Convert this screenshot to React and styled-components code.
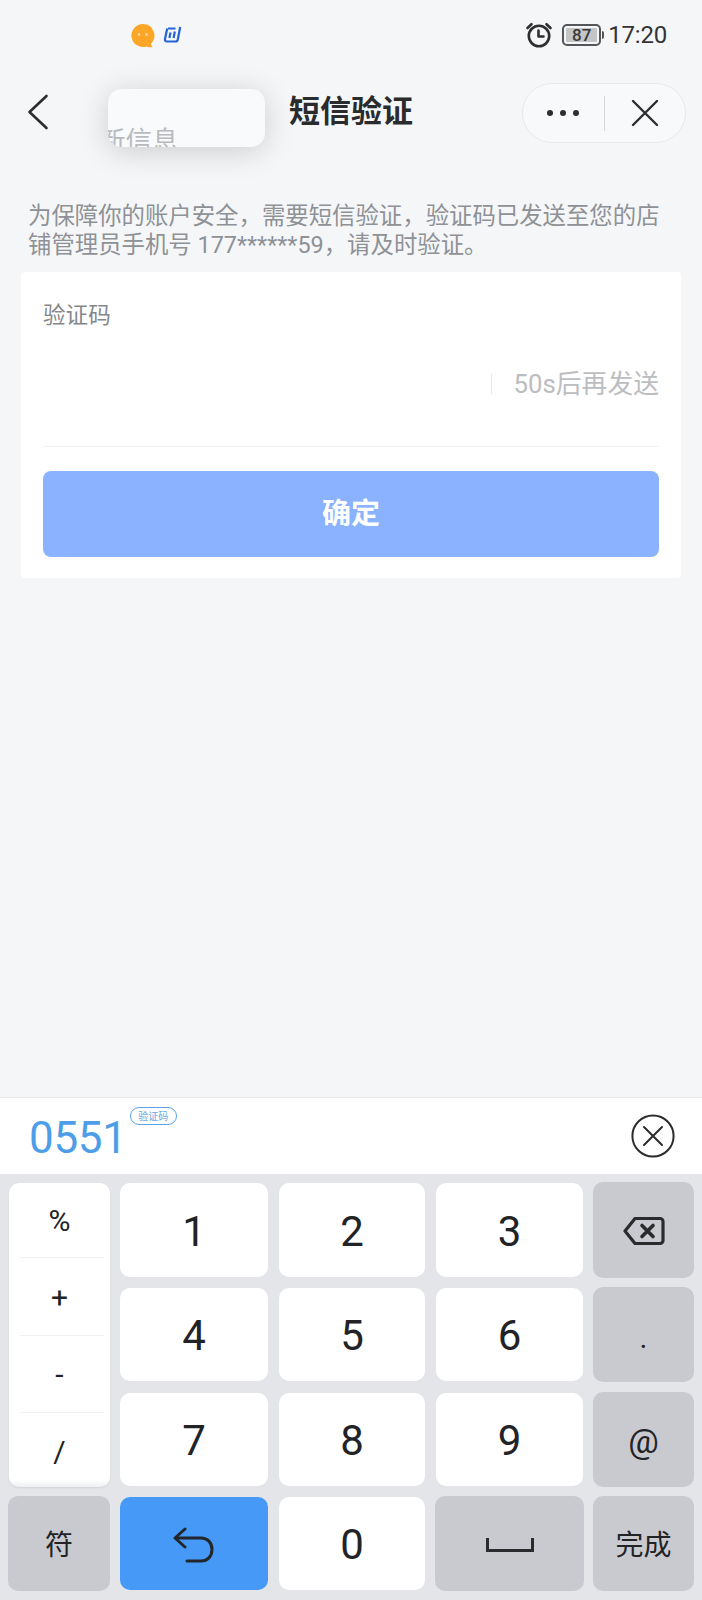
import React from "react";
import styled, { createGlobalStyle } from "styled-components";

const CJK = `"Noto Sans CJK SC", "Noto Sans", sans-serif`;
const LATIN_CJK = `Roboto, "Noto Sans CJK SC", sans-serif`;

const GlobalStyle = createGlobalStyle`
  html, body {
    margin: 0;
    padding: 0;
    background: #f5f6f8;
  }
  * {
    box-sizing: border-box;
  }
`;

const Page = styled.div`
  position: relative;
  width: 702px;
  height: 1600px;
  display: flex;
  flex-direction: column;
  background: #f5f6f8;
  font-family: ${LATIN_CJK};
  overflow: hidden;
`;

/* status bar */
const StatusBar = styled.div`
  height: 70px;
  display: flex;
  align-items: center;
  padding: 0 35px 0 131px;
`;

const NotifyIcons = styled.div`
  display: flex;
  align-items: center;
  gap: 6px;
`;

const StatusRight = styled.div`
  margin-left: auto;
  display: flex;
  align-items: center;
  gap: 9px;
`;

const BatteryBody = styled.div`
  width: 39px;
  height: 22px;
  border: 2px solid #55565a;
  border-radius: 5px;
  padding: 2px;
  position: relative;
  &::after {
    content: "";
    position: absolute;
    right: -5px;
    top: 5px;
    width: 2px;
    height: 8px;
    background: #55565a;
    border-radius: 0 2px 2px 0;
  }
`;

const BatteryLevel = styled.div`
  height: 100%;
  background: #c4c5c7;
  border-radius: 1px;
  display: flex;
  align-items: center;
  justify-content: center;
  font-size: 17px;
  font-weight: 500;
  color: #37383a;
  white-space: nowrap;
`;

const Clock = styled.span`
  font-size: 24px;
  color: #333436;
  margin-left: -2px;
  letter-spacing: -0.2px;
`;

/* navigation bar */
const NavBar = styled.div`
  height: 84px;
  display: flex;
  align-items: center;
  padding: 0 16px 0 27px;
`;

const BackButton = styled.div`
  width: 262px;
  display: flex;
  align-items: center;
`;

const Title = styled.h1`
  margin: 0 0 6px;
  font-family: ${CJK};
  font-size: 31px;
  line-height: 40px;
  font-weight: 700;
  color: #2a2b2d;
`;

const Capsule = styled.div`
  margin-left: auto;
  width: 164px;
  height: 60px;
  margin-top: 2px;
  border: 1px solid #e8e9eb;
  border-radius: 30px;
  background: #f8f9fa;
  display: flex;
  align-items: center;
`;

const CapsulePart = styled.div`
  flex: 1;
  display: flex;
  align-items: center;
  justify-content: center;
`;

const CapsuleDivider = styled.div`
  width: 1px;
  height: 35px;
  background: #d6d7da;
`;

const Dot = styled.span`
  width: 6px;
  height: 6px;
  border-radius: 50%;
  background: #2c2d2f;
  margin: 0 3.5px;
`;

const FloatingTip = styled.div`
  position: absolute;
  left: 108px;
  top: 89px;
  width: 157px;
  height: 58px;
  border-radius: 14px;
  background: #f9fafb;
  box-shadow: 0 4px 30px rgba(0, 0, 0, 0.17);
  overflow: hidden;
  display: flex;
  align-items: flex-end;
`;

const FloatingText = styled.span`
  font-family: ${CJK};
  font-size: 26.5px;
  line-height: 30px;
  color: #b9babd;
  margin-left: -9px;
  margin-bottom: -7px;
  white-space: nowrap;
`;

/* form */
const Intro = styled.p`
  margin: 48px 28px 12px;
  font-family: ${LATIN_CJK};
  font-size: 23.4px;
  line-height: 29px;
  color: #8e9195;
  width: 640px;
`;

const Card = styled.section`
  margin: 0 21px;
  height: 306px;
  padding: 28px 22px 0;
  background: #fff;
  border-radius: 4px;
`;

const Label = styled.div`
  font-family: ${CJK};
  font-size: 22.6px;
  line-height: 28px;
  color: #85878b;
`;

const CodeRow = styled.div`
  height: 119px;
  padding-bottom: 6px;
  display: flex;
  align-items: center;
  justify-content: flex-end;
  border-bottom: 1px solid #f2f3f5;
`;

const RowDivider = styled.span`
  width: 1px;
  height: 20px;
  background: #e6e7e9;
  margin-right: 22px;
`;

const Resend = styled.span`
  font-size: 25.8px;
  line-height: 30px;
  color: #bcbdc0;
`;

const ConfirmButton = styled.button`
  display: block;
  width: 100%;
  height: 86px;
  margin-top: 24px;
  border: 0;
  border-radius: 8px;
  background: #8ab2ff;
  color: #fff;
  font-family: ${CJK};
  font-size: 29px;
  font-weight: 700;
  padding: 0 0 6px;
`;

/* keyboard */
const Keyboard = styled.div`
  margin-top: auto;
`;

const Suggestion = styled.div`
  height: 77px;
  background: #fff;
  border-top: 1px solid #e8e9eb;
  padding: 0 27px 0 29px;
  display: flex;
  align-items: flex-start;
`;

const SmsCode = styled.span`
  font-size: 44px;
  line-height: 52px;
  margin-top: 14px;
  color: #4d9de8;
  letter-spacing: -0.3px;
`;

const SmsTag = styled.span`
  margin: 9px 0 0 3px;
  width: 47px;
  height: 18px;
  border: 1px solid #5aa3e6;
  border-radius: 9px;
  font-family: ${CJK};
  font-size: 10px;
  line-height: 16px;
  text-align: center;
  color: #6aa9e2;
`;

const DismissButton = styled.div`
  margin: 16px 0 0 auto;
`;

const KeyGrid = styled.div`
  height: 426px;
  padding-top: 8px;
  padding-left: 8px;
  background: #e4e5e9;
  display: grid;
  grid-template-columns: 102px 150px 148px 149px 101px;
  grid-template-rows: 96px 95px 95px 95px;
  column-gap: 9px;
  row-gap: 9.4px;
`;

const Key = styled.div`
  display: flex;
  align-items: center;
  justify-content: center;
  border-radius: 10px;
  color: #222326;
  font-size: ${(p) => p.$size || 42}px;
  padding-top: ${(p) => p.$drop || 2}px;
  background: ${(p) =>
    p.$tone === "gray" ? "#c9cacf" : p.$tone === "blue" ? "#4799f8" : "#fff"};
  margin: ${(p) => (p.$tone === "gray" ? 0 : "1px")};
`;

const ZhKey = styled(Key)`
  font-family: ${CJK};
  font-size: 28px;
  padding: 0 0 2px;
`;

const SymbolPanel = styled.div`
  grid-column: 1;
  grid-row: 1 / span 3;
  margin: 1px 0 0 1px;
  background: linear-gradient(#fff 97.5%, #eef0f2);
  border-radius: 10px;
  padding: 0 6px 0 11px;
  display: flex;
  flex-direction: column;
  box-shadow: 0 1px 2px rgba(0, 0, 0, 0.08);
`;

const SymbolItem = styled.div`
  height: ${(p) => p.$height}px;
  padding: ${(p) => (p.$last ? "5px" : "2px")} 5px 0 0;
  display: flex;
  align-items: center;
  justify-content: center;
  font-size: 30px;
  color: #222326;
  border-bottom: 1px solid ${(p) => (p.$last ? "transparent" : "#f1f2f3")};
`;

const OrangeBubble = () => (
  <svg width="25" height="25" viewBox="0 0 25 25">
    <path d="M12 1a11.5 11.5 0 1 0 3.6 22.4c2 .9 4.3 1 6 .6-1-.9-1.6-2-1.7-3.3A11.5 11.5 0 0 0 12 1z" fill="#fba626" />
    <circle cx="8" cy="11.5" r="1.2" fill="#fde3b0" />
    <circle cx="15.5" cy="11.5" r="1.2" fill="#fde3b0" />
  </svg>
);

const BlueLogo = () => (
  <svg width="20" height="20" viewBox="0 0 20 20" fill="none" stroke="#2462d6" strokeWidth="2.2">
    <path d="M6 3.500h7.500M5.200 3.500 3 14c-.3 1.500.4 2.500 2 2.500h8.500c1.300 0 2-.7 2.300-2L18.200 2" />
    <path d="M8.500 7.500 7.400 13M12.800 6.500 11.600 13" />
  </svg>
);

const AlarmIcon = () => (
  <svg width="28" height="26" viewBox="0 0 28 26" fill="none" stroke="#2d2e30" strokeWidth="2.6" strokeLinecap="round" strokeLinejoin="round">
    <circle cx="14" cy="14" r="10.200" />
    <path d="M13.500 8.500v6h5" />
    <path d="M2.500 6 6.500 2.200M25.500 6l-4-3.800" />
  </svg>
);

const BackIcon = () => (
  <svg width="22" height="36" viewBox="0 0 22 36" fill="none" stroke="#2c2d2f" strokeWidth="2.6" strokeLinecap="round" strokeLinejoin="round">
    <path d="M19.500 2 2.500 18l17 16" />
  </svg>
);

const CloseIcon = () => (
  <svg width="28" height="28" viewBox="0 0 28 28" fill="none" stroke="#2c2d2f" strokeWidth="2.4" strokeLinecap="round">
    <path d="M2 2l24 24M26 2 2 26" />
  </svg>
);

const DismissIcon = () => (
  <svg width="44" height="44" viewBox="0 0 44 44" fill="none" stroke="#2a2b2d" strokeWidth="2">
    <circle cx="22" cy="22" r="20.600" />
    <path d="M13 13l18 18M31 13 13 31" strokeLinecap="round" />
  </svg>
);

const BackspaceIcon = () => (
  <svg width="42" height="30" viewBox="0 0 42 30" fill="none" stroke="#2a2b2d" strokeWidth="3.2" strokeLinejoin="round" strokeLinecap="round">
    <path d="M12 2.500h25a3 3 0 0 1 3 3v19a3 3 0 0 1-3 3H12L2 15z" />
    <path d="M19 9.500l11 11M30 9.500l-11 11" strokeWidth="3.6" />
  </svg>
);

const ReturnIcon = () => (
  <svg width="42" height="36" viewBox="0 0 42 36" fill="none" stroke="#23262b" strokeWidth="3" strokeLinecap="round" strokeLinejoin="round">
    <path d="M12 2 2 11l10 9" />
    <path d="M3 11h25c6.500 0 11 4.500 11 11.500S34.500 34 28 34H14" />
  </svg>
);

const SpaceIcon = () => (
  <svg width="48" height="16" viewBox="0 0 48 16" fill="none" stroke="#2a2b2d" strokeWidth="3">
    <path d="M1.500 1v12.500h45V1" />
  </svg>
);

const SYMBOLS = [
  { label: "%", height: 75 },
  { label: "+", height: 78 },
  { label: "-", height: 77 },
  { label: "/", height: 74 },
];

export default function App() {
  return (
    <Page>
      <GlobalStyle />
      <StatusBar>
        <NotifyIcons>
          <OrangeBubble />
          <BlueLogo />
        </NotifyIcons>
        <StatusRight>
          <AlarmIcon />
          <BatteryBody>
            <BatteryLevel>87</BatteryLevel>
          </BatteryBody>
          <Clock>17:20</Clock>
        </StatusRight>
      </StatusBar>

      <NavBar>
        <BackButton>
          <BackIcon />
        </BackButton>
        <Title>短信验证</Title>
        <Capsule>
          <CapsulePart>
            <Dot />
            <Dot />
            <Dot />
          </CapsulePart>
          <CapsuleDivider />
          <CapsulePart>
            <CloseIcon />
          </CapsulePart>
        </Capsule>
      </NavBar>

      <FloatingTip>
        <FloatingText>新信息</FloatingText>
      </FloatingTip>

      <Intro>
        为保障你的账户安全，需要短信验证，验证码已发送至您的店铺管理员手机号 177******59，请及时验证。
      </Intro>

      <Card>
        <Label>验证码</Label>
        <CodeRow>
          <RowDivider />
          <Resend>50s后再发送</Resend>
        </CodeRow>
        <ConfirmButton>确定</ConfirmButton>
      </Card>

      <Keyboard>
        <Suggestion>
          <SmsCode>0551</SmsCode>
          <SmsTag>验证码</SmsTag>
          <DismissButton>
            <DismissIcon />
          </DismissButton>
        </Suggestion>
        <KeyGrid>
          <SymbolPanel>
            {SYMBOLS.map((s, i) => (
              <SymbolItem key={s.label} $height={s.height} $last={i === SYMBOLS.length - 1}>
                {s.label}
              </SymbolItem>
            ))}
          </SymbolPanel>
          <Key>1</Key>
          <Key>2</Key>
          <Key>3</Key>
          <Key $tone="gray">
            <BackspaceIcon />
          </Key>
          <Key>4</Key>
          <Key>5</Key>
          <Key>6</Key>
          <Key $tone="gray" $size={30} $drop={6}>.</Key>
          <Key>7</Key>
          <Key>8</Key>
          <Key>9</Key>
          <Key $tone="gray" $size={34} $drop={3}>@</Key>
          <ZhKey $tone="gray">符</ZhKey>
          <Key $tone="blue">
            <ReturnIcon />
          </Key>
          <Key>0</Key>
          <Key $tone="gray">
            <SpaceIcon />
          </Key>
          <ZhKey $tone="gray">完成</ZhKey>
        </KeyGrid>
      </Keyboard>
    </Page>
  );
}
